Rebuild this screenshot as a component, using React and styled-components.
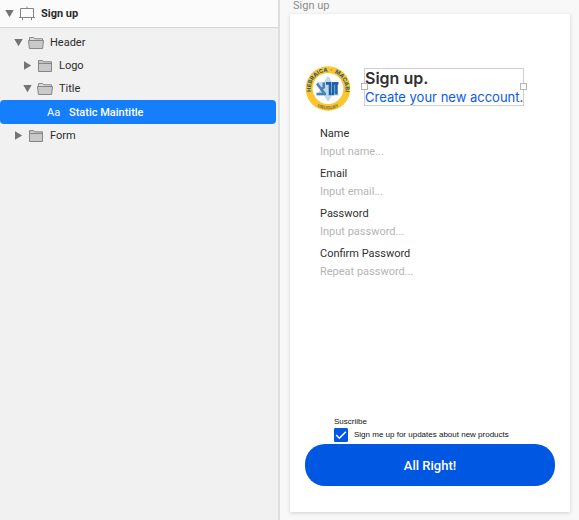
import React, { useState } from "react";
import styled, { createGlobalStyle, css } from "styled-components";

const GlobalStyle = createGlobalStyle`
  *, *::before, *::after { box-sizing: border-box; }
  body {
    margin: 0;
    font-family: Roboto, "Liberation Sans", sans-serif;
    font-size: 11px;
    color: #2b2b2b;
    background: #f8f8f8;
  }
  button, input { font: inherit; color: inherit; }
`;

const Workspace = styled.div`
  display: grid;
  grid-template-columns: 280px minmax(0, 1fr);
  min-height: 100vh;
`;

const Sidebar = styled.nav`
  background: #f1f1f1;
  border-right: 2px solid #dedede;
`;

const rowBase = css`
  display: flex;
  align-items: center;
  border: 0;
  text-align: left;
  cursor: default;
`;

const PageRow = styled.button`
  ${rowBase}
  width: 100%;
  height: 28px;
  padding: 0 5px;
  background: #fbfbfb;
  border-bottom: 1px solid #d6d6d6;
  font-weight: 700;
  gap: 5px;
`;

const PageName = styled.span`
  padding-left: 1px;
`;

const LayerList = styled.ul`
  list-style: none;
  margin: 0;
  padding: 3px 2px 0 0;
`;

const LayerRow = styled.button`
  ${rowBase}
  width: 100%;
  height: 23px;
  gap: 5px;
  padding: 0 0 0 ${(p) => 5 + p.$depth * 9}px;
  background: transparent;
`;

const SelectedRow = styled(LayerRow)`
  height: 24px;
  padding-left: 47px;
  gap: 8px;
  border-radius: 4px;
  background: #147efb;
  color: #fff;
  font-weight: 500;
`;

const TextGlyph = styled.span`
  width: 14px;
  font-weight: 400;
`;

const LayerName = styled.span`
  padding-left: 1px;
`;

const Icon = styled.svg`
  display: block;
  flex: none;
`;

const Canvas = styled.main`
  display: flex;
  flex-direction: column;
  padding: 0 9px 8px 10px;
  background: #f8f8f8;
`;

const ArtboardName = styled.div`
  height: 14px;
  padding-left: 3px;
  line-height: 12px;
  color: #8b8b8b;
`;

const Artboard = styled.section`
  flex: 1;
  display: flex;
  flex-direction: column;
  padding: 52px 15px 26px;
  background: #fff;
  box-shadow: 0 1px 4px rgba(0, 0, 0, 0.16);
`;

const Header = styled.header`
  display: flex;
  align-items: flex-start;
  gap: 13px;
`;

const Selection = styled.div`
  position: relative;
  margin-top: 2px;
  height: 38px;
  border: 1px solid #cfcfcf;
  font-family: Inter, sans-serif;
`;

const Handle = styled.span`
  position: absolute;
  top: 14px;
  ${(p) => p.$side}: -4px;
  width: 7px;
  height: 7px;
  background: #fff;
  border: 1px solid #b5b5b5;
`;

const Title = styled.h1`
  margin: 0;
  font-size: 16px;
  line-height: 19px;
  font-weight: 600;
  color: #303030;
`;

const Subtitle = styled.p`
  margin: 0;
  font-size: 13px;
  line-height: 18px;
  color: #0b5be6;
  white-space: nowrap;
`;

const Form = styled.form`
  flex: 1;
  display: flex;
  flex-direction: column;
`;

const Fields = styled.div`
  flex: 1;
  display: grid;
  align-content: start;
  gap: 4px;
  padding: 13px 0 0 15px;
`;

const Field = styled.label`
  display: grid;
  line-height: 18px;
  color: #303030;
`;

const TextInput = styled.input`
  width: 100%;
  height: 18px;
  padding: 0;
  border: 0;
  outline: 0;
  background: transparent;
  &::placeholder { color: #b5b5b5; opacity: 1; }
`;

const Subscribe = styled.fieldset`
  margin: 0;
  padding: 0 0 2px 29px;
  border: 0;
  font-family: "Liberation Sans", Arial, sans-serif;
  font-size: 8px;
  color: #111;
`;

const Legend = styled.legend`
  padding: 0;
  line-height: 12px;
`;

const CheckLabel = styled.label`
  display: flex;
  align-items: center;
  gap: 6px;
  line-height: 14px;
`;

const CheckBoxCell = styled.span`
  display: grid;
  width: 14px;
  height: 14px;
  & > * { grid-area: 1 / 1; }
`;

const CheckInput = styled.input`
  appearance: none;
  width: 14px;
  height: 14px;
  margin: 0;
  border-radius: 1px;
  border: 1px solid #0057e1;
  &:checked { background: #0057e1; }
`;

const CheckMark = styled(Icon)`
  pointer-events: none;
`;

const Submit = styled.button`
  height: 42px;
  border: 0;
  border-radius: 20px;
  background: #0057e1;
  color: #fff;
  font-size: 13px;
  font-weight: 500;
`;

const Arrow = ({ open }) => (
  <Icon width="9" height="9" viewBox="0 0 9 9" aria-hidden="true">
    <path d={open ? "M0.3 1h8.4L4.5 8.2z" : "M1 0.3v8.4L8.2 4.5z"} fill="#747474" />
  </Icon>
);

const Folder = ({ open }) => (
  <Icon width="16" height="14" viewBox="0 0 16 14" fill="#c9c9c9" stroke="#858585" aria-hidden="true">
    {open ? (
      <>
        <path d="M1.5 5V1.6h4.3l1 1.2h7.7V5" fill="#e0e0e0" />
        <path d="M0.5 4.5h15l-0.9 8H1.4z" />
      </>
    ) : (
      <>
        <path d="M1.5 12.5V1.6h4.3l1 1.2h7.7v9.7z" />
        <path d="M1.5 4.5h13" />
      </>
    )}
  </Icon>
);

const ArtboardIcon = () => (
  <Icon width="16" height="15" viewBox="0 0 16 15" fill="none" stroke="#858585" aria-hidden="true">
    <path d="M1.5 2.5h13v9h-13zM0 11.5h16M8 0.5v2M3.5 12v2.2M12.5 12v2.2" />
  </Icon>
);

const Crest = () => (
  <Icon width="46" height="46" viewBox="0 0 46 46" role="img" aria-label="Hebraica Macabi Uruguay">
    <defs>
      <path id="crest-top" d="M7 29.2A17.2 17.2 0 1 1 39 29.2" />
      <path id="crest-bottom" d="M5 33A20.6 20.6 0 0 0 41 33" />
    </defs>
    <circle cx="23" cy="22.5" r="22.3" fill="#fbc52d" />
    <circle cx="23" cy="22.5" r="15.4" fill="#fff" />
    <g fontFamily="Inter, sans-serif" fontWeight="800" fontSize="5.6" fill="#3d6370" textAnchor="middle">
      <text>
        <textPath href="#crest-top" startOffset="50%">{"HEBRAICA\u00a0\u00a0·\u00a0\u00a0MACABI"}</textPath>
      </text>
      <text fontSize="4.6" fill="#877a45">
        <textPath href="#crest-bottom" startOffset="50%">URUGUAY</textPath>
      </text>
    </g>
    <path d="M23 9.5l4 6.5h7l-3.7 6.8L34 29.5h-7L23 36l-4-6.5h-7l3.7-6.7L12 16h7z" fill="#c3d9ea" />
    <g fill="none" stroke="#1c63a6" strokeWidth="2.6">
      <path d="M21 17.4h4v11.8M27 17.4h6.4M31.4 17.4v11.2M28.2 17.4v10M26.6 28h2.6" />
      <path d="M12 17.4l7.4 10.2M18.8 16.4v5l-2.8 1.8M11.5 28h9.6" stroke="#4684b8" />
    </g>
  </Icon>
);

const layers = [
  { name: "Header", depth: 1, open: true },
  { name: "Logo", depth: 2, open: false },
  { name: "Title", depth: 2, open: true },
  { name: "Static Maintitle", selected: true },
  { name: "Form", depth: 1, open: false },
];

const fields = [
  { label: "Name", placeholder: "Input name...", type: "text" },
  { label: "Email", placeholder: "Input email...", type: "email" },
  { label: "Password", placeholder: "Input password...", type: "password" },
  { label: "Confirm Password", placeholder: "Repeat password...", type: "password" },
];

export default function App() {
  const [subscribed, setSubscribed] = useState(true);
  return (
    <>
      <GlobalStyle />
      <Workspace>
        <Sidebar aria-label="Layers">
          <PageRow type="button" aria-expanded="true">
            <Arrow open />
            <ArtboardIcon />
            <PageName>Sign up</PageName>
          </PageRow>
          <LayerList>
            {layers.map((layer) => (
              <li key={layer.name}>
                {layer.selected ? (
                  <SelectedRow type="button" aria-current="true" $depth={3}>
                    <TextGlyph aria-hidden="true">Aa</TextGlyph>
                    <span>{layer.name}</span>
                  </SelectedRow>
                ) : (
                  <LayerRow type="button" aria-expanded={layer.open} $depth={layer.depth}>
                    <Arrow open={layer.open} />
                    <Folder open={layer.open} />
                    <LayerName>{layer.name}</LayerName>
                  </LayerRow>
                )}
              </li>
            ))}
          </LayerList>
        </Sidebar>
        <Canvas>
          <ArtboardName>Sign up</ArtboardName>
          <Artboard>
            <Header>
              <Crest />
              <Selection>
                <Title>Sign up.</Title>
                <Subtitle>Create your new account.</Subtitle>
                <Handle $side="left" />
                <Handle $side="right" />
              </Selection>
            </Header>
            <Form onSubmit={(e) => e.preventDefault()}>
              <Fields>
                {fields.map((f) => (
                  <Field key={f.label}>
                    {f.label}
                    <TextInput type={f.type} placeholder={f.placeholder} />
                  </Field>
                ))}
              </Fields>
              <Subscribe>
                <Legend>Suscriibe</Legend>
                <CheckLabel>
                  <CheckBoxCell>
                    <CheckInput
                      type="checkbox"
                      checked={subscribed}
                      onChange={(e) => setSubscribed(e.target.checked)}
                    />
                    {subscribed && (
                      <CheckMark width="14" height="14" viewBox="0 0 14 14" aria-hidden="true">
                        <path d="M2.2 7l3.2 3.2 6.4-6.4" fill="none" stroke="#fff" strokeWidth="1.6" />
                      </CheckMark>
                    )}
                  </CheckBoxCell>
                  Sign me up for updates about new products
                </CheckLabel>
              </Subscribe>
              <Submit type="submit">All Right!</Submit>
            </Form>
          </Artboard>
        </Canvas>
      </Workspace>
    </>
  );
}
